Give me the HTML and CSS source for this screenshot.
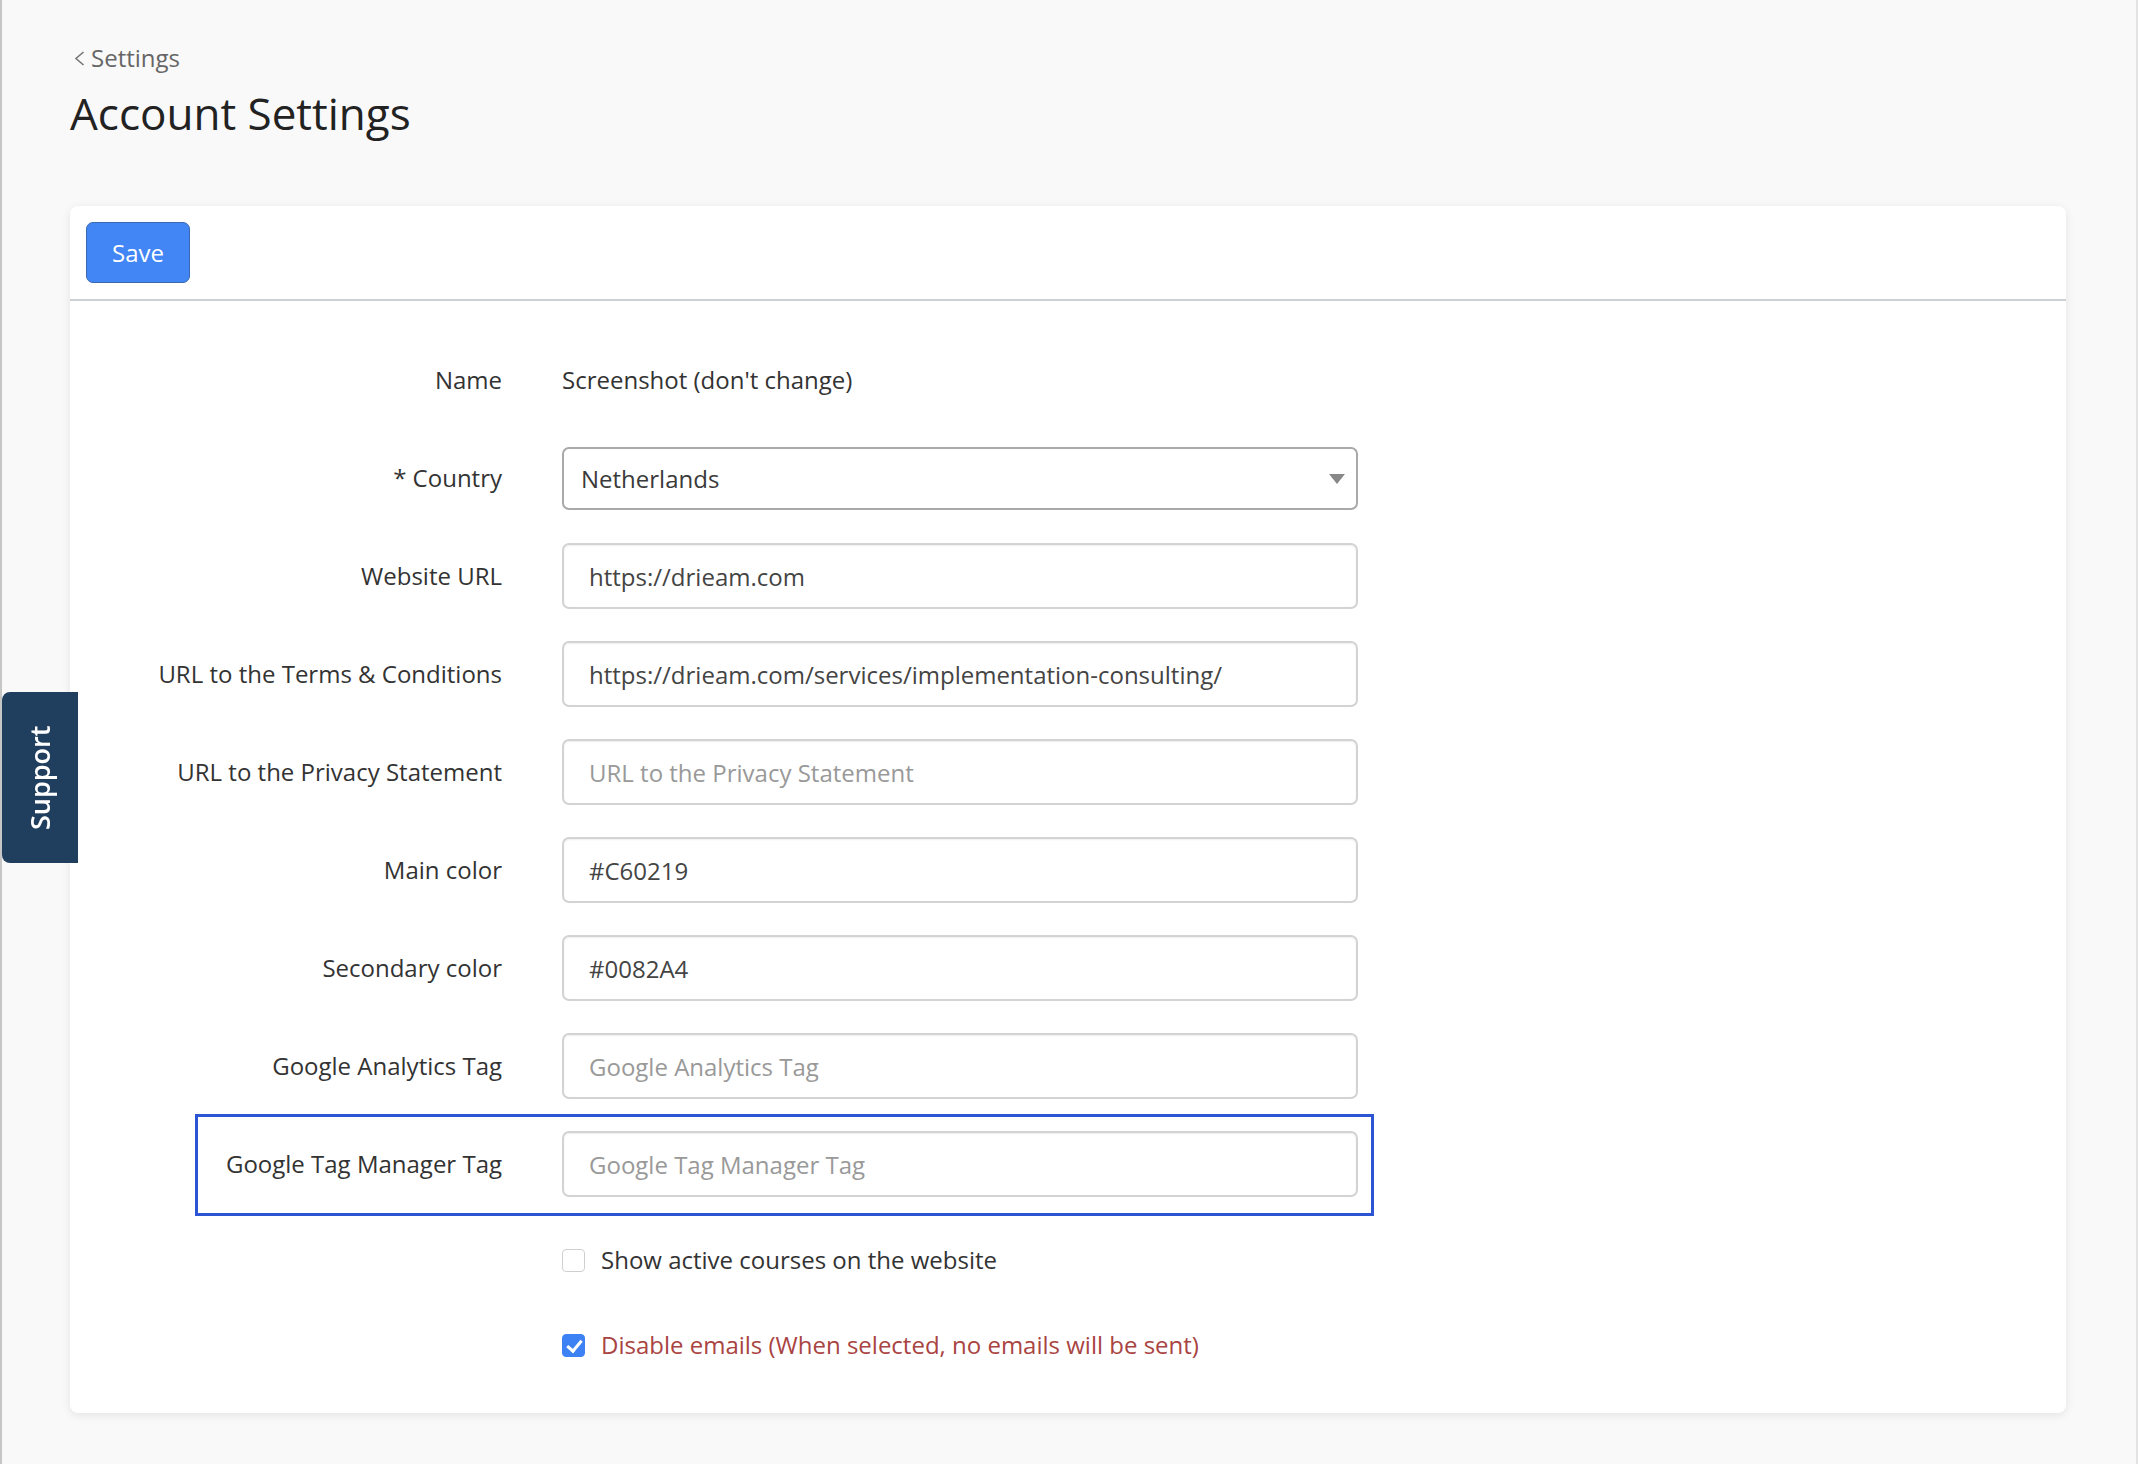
FILE: index.html
```html
<!DOCTYPE html>
<html lang="en">
<head>
    <meta charset="UTF-8">
    <meta name="viewport" content="width=device-width, initial-scale=1.0">
    <title>Account Settings</title>
    <link rel="stylesheet" href="styles.css">
</head>
<body>
    <div class="page">
        <a class="back" href="#">
            <svg class="back-icon" width="11" height="15" viewBox="0 0 11 15"><path d="M9.5 1 L2 7.5 L9.5 14" fill="none" stroke="#777" stroke-width="1.6"/></svg>
            Settings
        </a>
        <h1 class="title">Account Settings</h1>

        <div class="card">
            <div class="card-head">
                <button class="btn-save">Save</button>
            </div>
            <form class="form">
                <div class="row">
                    <label>Name</label>
                    <span class="value">Screenshot (don't change)</span>
                </div>
                <div class="row">
                    <label for="country">* Country</label>
                    <div class="select-wrap">
                        <select id="country" class="select">
                            <option selected>Netherlands</option>
                            <option>Belgium</option>
                            <option>Germany</option>
                        </select>
                    </div>
                </div>
                <div class="row">
                    <label for="website">Website URL</label>
                    <input class="input" type="text" id="website" value="https://drieam.com">
                </div>
                <div class="row">
                    <label for="terms">URL to the Terms &amp; Conditions</label>
                    <input class="input" type="text" id="terms" value="https://drieam.com/services/implementation-consulting/">
                </div>
                <div class="row">
                    <label for="privacy">URL to the Privacy Statement</label>
                    <input class="input" type="text" id="privacy" placeholder="URL to the Privacy Statement">
                </div>
                <div class="row">
                    <label for="main-color">Main color</label>
                    <input class="input" type="text" id="main-color" value="#C60219">
                </div>
                <div class="row">
                    <label for="second-color">Secondary color</label>
                    <input class="input" type="text" id="second-color" value="#0082A4">
                </div>
                <div class="row">
                    <label for="ga">Google Analytics Tag</label>
                    <input class="input" type="text" id="ga" placeholder="Google Analytics Tag">
                </div>
                <div class="row row-marked">
                    <label for="gtm">Google Tag Manager Tag</label>
                    <input class="input" type="text" id="gtm" placeholder="Google Tag Manager Tag">
                </div>
                <div class="checks">
                    <label class="check">
                        <input type="checkbox" class="checkbox">
                        <span>Show active courses on the website</span>
                    </label>
                    <label class="check check-danger">
                        <input type="checkbox" class="checkbox" checked>
                        <span>Disable emails (When selected, no emails will be sent)</span>
                    </label>
                </div>
            </form>
        </div>
    </div>

    <a class="support" href="#">Support</a>
</body>
</html>
```

FILE: styles.css
```css
body {
    margin: 0;
    font-family: "Open Sans", "Noto Sans", Arial, sans-serif;
    font-size: 24px;
    line-height: 1.5;
    color: #333;
    background-color: #f9f9f9;
}
.page {
    box-sizing: border-box;
    min-height: 100vh;
    padding: 39px 70px 40px 68px;
    border-left: 2px solid #c6c6c6;
    border-right: 2px solid #e3e3e3;
}
.back {
    display: inline-flex;
    align-items: center;
    gap: 6px;
    color: #666;
    text-decoration: none;
    margin-left: 4px;
}
.back-icon {
    margin-top: 2px;
}
.title {
    margin: 11px 0 0;
    font-size: 44px;
    font-weight: 400;
    line-height: 1.2;
    color: #222;
}
.card {
    margin-top: 67px;
    background: #fff;
    border-radius: 8px;
    box-shadow: 0 2px 10px rgba(0, 0, 0, 0.09);
}
.card-head {
    padding: 16px;
    border-bottom: 2px solid #cdd1d5;
}
.btn-save {
    height: 61px;
    padding: 0 25px;
    font-family: inherit;
    font-size: 24px;
    color: #fff;
    background-color: #4285f4;
    border: 1px solid #3b69b0;
    border-radius: 7px;
}
.form {
    display: flex;
    flex-direction: column;
    gap: 32px;
    padding: 46px 0;
}
.row {
    position: relative;
    align-self: flex-start;
    display: grid;
    grid-template-columns: 432px 796px;
    column-gap: 60px;
    align-items: center;
    min-height: 66px;
}
.row > label {
    text-align: right;
    color: #333;
}
.value {
    color: #333;
}
.select-wrap {
    position: relative;
}
.select-wrap::after {
    content: "";
    position: absolute;
    right: 13px;
    top: 27px;
    border-left: 8px solid transparent;
    border-right: 8px solid transparent;
    border-top: 10px solid #888;
}
.select {
    -webkit-appearance: none;
    appearance: none;
    box-sizing: border-box;
    width: 100%;
    height: 63px;
    padding: 0 17px;
    font-family: inherit;
    font-size: 24px;
    color: #3a3a3a;
    background: #fff;
    border: 2px solid #a9a9a9;
    border-radius: 7px;
}
.input {
    box-sizing: border-box;
    width: 100%;
    height: 66px;
    padding: 0 25px;
    font-family: inherit;
    font-size: 24px;
    color: #444;
    background: #fff;
    border: 2px solid #d3d3d3;
    border-radius: 7px;
    box-shadow: inset 0 1px 2px rgba(0, 0, 0, 0.07);
}
.input::placeholder {
    color: #999;
}
.row-marked::after {
    content: "";
    position: absolute;
    left: 125px;
    right: -16px;
    top: -17px;
    bottom: -19px;
    border: 3px solid #2b55d2;
    pointer-events: none;
}
.checks {
    display: flex;
    flex-direction: column;
    gap: 41px;
    margin-top: 9px;
    padding-left: 492px;
}
.check {
    display: flex;
    align-items: center;
    gap: 16px;
    min-height: 44px;
    color: #333;
}
.check-danger {
    color: #a94442;
}
.checkbox {
    -webkit-appearance: none;
    appearance: none;
    position: relative;
    box-sizing: border-box;
    width: 23px;
    height: 23px;
    margin: 0;
    background: #fff;
    border: 1px solid #cfcfcf;
    border-radius: 4px;
}
.checkbox:checked {
    background: #3d82f5;
    border-color: #3d82f5;
}
.checkbox:checked::after {
    content: "";
    position: absolute;
    left: 7px;
    top: 2px;
    width: 6px;
    height: 12px;
    border-right: 3px solid #fff;
    border-bottom: 3px solid #fff;
    transform: rotate(40deg);
}
.support {
    position: fixed;
    left: 2px;
    top: 692px;
    display: flex;
    align-items: center;
    justify-content: center;
    width: 76px;
    height: 171px;
    background-color: #203f5e;
    border-radius: 0 8px 8px 0;
    color: #fff;
    font-size: 27px;
    font-weight: 600;
    text-decoration: none;
    writing-mode: vertical-rl;
    transform: rotate(180deg);
}
```
